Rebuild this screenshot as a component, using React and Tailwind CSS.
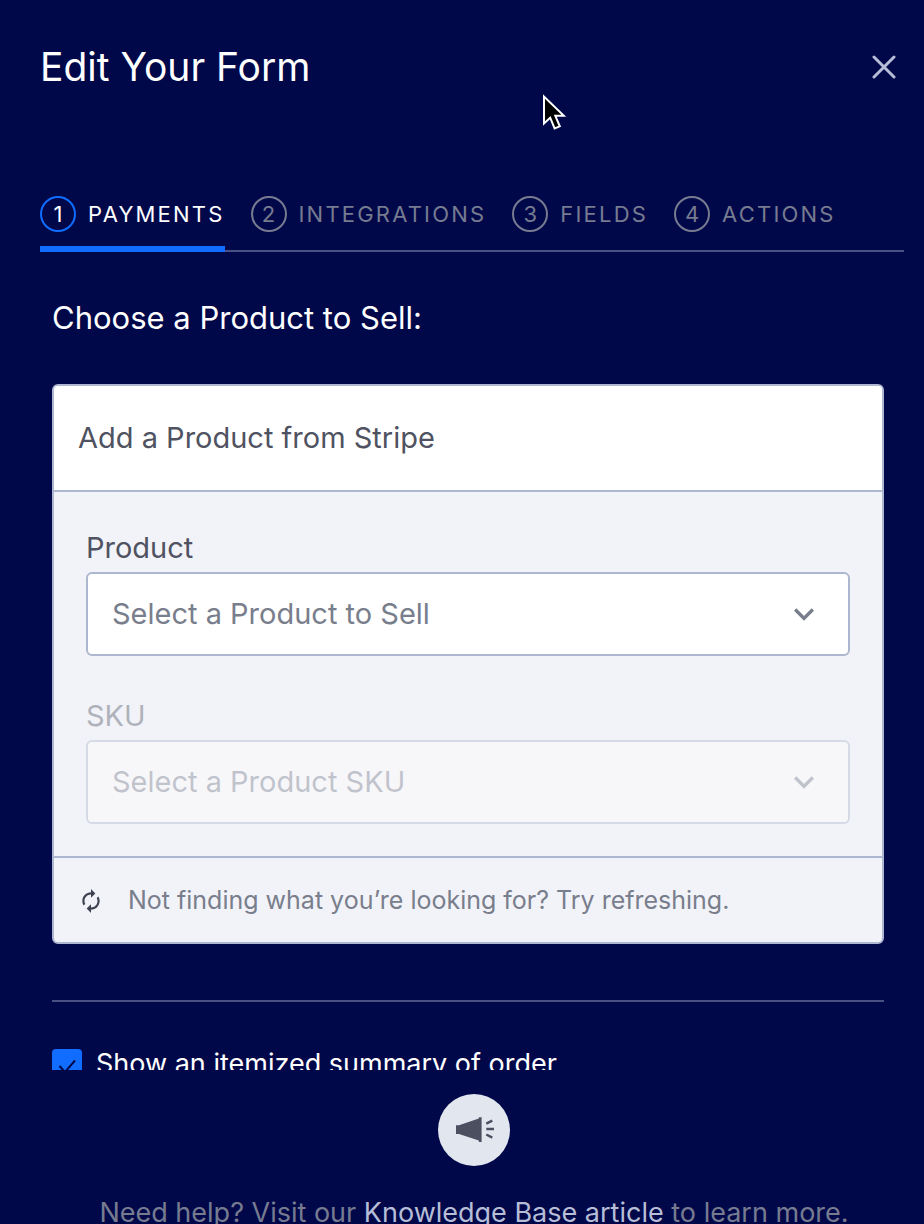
import { useState } from "react";
import { MdAutorenew, MdExpandMore } from "react-icons/md";

const STEPS = ["Payments", "Integrations", "Fields", "Actions"];

function StepTab({ number, label, active, onSelect }) {
  return (
    <button
      type="button"
      role="tab"
      aria-selected={active}
      onClick={onSelect}
      className={`-mb-[2px] flex items-start gap-3 border-b-[6px] pb-[14px] ${
        active ? "border-[#116dff] text-white" : "border-transparent text-[#777b90]"
      }`}
    >
      <span
        className={`flex size-9 items-center justify-center rounded-full border-2 text-[22px] ${
          active ? "border-[#116dff]" : "border-[#777b90]"
        }`}
      >
        {number}
      </span>
      <span className="text-[22px] leading-9 tracking-widest uppercase">{label}</span>
    </button>
  );
}

function SelectField({ id, label, placeholder, disabled }) {
  return (
    <div className={disabled ? "opacity-40" : ""}>
      <label htmlFor={id} className="mb-1 block text-[29px] leading-10 text-[#4f5261]">
        {label}
      </label>
      <div className="relative">
        <select
          id={id}
          disabled={disabled}
          className="block h-[84px] w-full appearance-none rounded-md border-2 border-[#adb7cf] bg-white px-6 text-[29px] text-[#797e8c] opacity-100"
        >
          <option>{placeholder}</option>
        </select>
        <MdExpandMore className="pointer-events-none absolute top-[22px] right-[26px] size-10 text-[#797e8c]" />
      </div>
    </div>
  );
}

function Pointer() {
  return (
    <svg viewBox="0 0 24 38" className="pointer-events-none absolute top-[93px] left-[542px] h-[38px] w-6">
      <path
        d="M2 3.5V30.500l6.200-5.800L12.600 35.500l5.200-2.200-4.500-10.500h8.600z"
        fill="#000"
        stroke="#fff"
        strokeWidth="2"
      />
    </svg>
  );
}

function Megaphone() {
  return (
    <svg viewBox="0 0 40 28" className="h-7 w-10" fill="#4c4f60">
      <path d="M2 9.200h3L24.800 2.500V1.200h2.800V26h-2.800v-1.500L5 18H2z" />
      <path
        d="M32.300 7.600l6-3M32.300 13h8M32.300 18.500l6 3.200"
        stroke="#4c4f60"
        strokeWidth="2.500"
      />
    </svg>
  );
}

function App() {
  const [step, setStep] = useState(0);
  const [itemized, setItemized] = useState(true);

  return (
    <div className="relative flex h-screen flex-col overflow-hidden bg-[#00084a] font-['Inter',sans-serif] text-white">
      <header className="flex items-center justify-between pt-[43px] pr-5 pl-10">
        <h1 className="text-[39px] leading-[48px]">Edit Your Form</h1>
        <button type="button" aria-label="Close" className="flex size-10 items-center justify-center">
          <svg viewBox="0 0 24 24" className="size-6" stroke="#b7bdd6" strokeWidth="3" strokeLinecap="round">
            <path d="M2 2l20 20M22 2L2 22" />
          </svg>
        </button>
      </header>

      <nav role="tablist" className="mt-[105px] mr-5 ml-10 flex gap-[26px] border-b-2 border-[#4b5083]">
        {STEPS.map((label, i) => (
          <StepTab
            key={label}
            number={i + 1}
            label={label}
            active={i === step}
            onSelect={() => setStep(i)}
          />
        ))}
      </nav>

      <main className="min-h-0 flex-1 overflow-y-auto pt-[46px] pr-10 pl-[52px] [scrollbar-width:none]">
        <h2 className="text-[31px] leading-10">Choose a Product to Sell:</h2>

        {/* Stripe product card */}
        <section className="mt-[46px] overflow-hidden rounded-md border-2 border-[#adb7cf] bg-[#f2f3f8]">
          <h3 className="border-b-2 border-[#adb7cf] bg-white px-6 py-8 text-[29px] leading-10 text-[#4f5261]">
            Add a Product from Stripe
          </h3>
          <div className="flex flex-col gap-10 px-8 pt-9 pb-8">
            <SelectField id="product" label="Product" placeholder="Select a Product to Sell" />
            <SelectField id="sku" label="SKU" placeholder="Select a Product SKU" disabled />
          </div>
          <button
            type="button"
            className="flex h-[86px] w-full items-center gap-6 border-t-2 border-[#adb7cf] px-6 pt-px text-[25px] text-[#797e8c]"
          >
            <MdAutorenew className="size-[26px] text-[#3f4252]" />
            Not finding what you’re looking for? Try refreshing.
          </button>
        </section>

        <hr className="mt-14 border-t-2 border-[#4b5083]" />

        <label className="mt-[42px] flex items-center gap-[14px] text-[27px] leading-10">
          <span className="relative size-[30px]">
            <input
              type="checkbox"
              checked={itemized}
              onChange={(e) => setItemized(e.target.checked)}
              className="block size-[30px] appearance-none rounded bg-white checked:bg-[#116dff]"
            />
            {itemized && (
              <svg viewBox="0 0 30 30" className="pointer-events-none absolute inset-0 size-[30px]" fill="none" stroke="#000748" strokeWidth="2">
                <path d="M7.500 17l5.500 6L23 11.500" />
              </svg>
            )}
          </span>
          Show an itemized summary of order
        </label>
      </main>

      <footer className="flex h-[154px] shrink-0 flex-col items-center gap-7 overflow-hidden pt-6 pl-6">
        <button
          type="button"
          aria-label="Announcements"
          className="flex size-[72px] shrink-0 items-center justify-center rounded-full bg-[#e2e6ee]"
        >
          <Megaphone />
        </button>
        <p className="text-[27px] leading-[38px] whitespace-nowrap text-[#777b90]">
          Need help? Visit our{" "}
          <a href="#help" className="text-[#b7bdd6]">
            Knowledge Base article
          </a>{" "}
          to learn more.
        </p>
      </footer>

      <Pointer />
    </div>
  );
}

export default App;
